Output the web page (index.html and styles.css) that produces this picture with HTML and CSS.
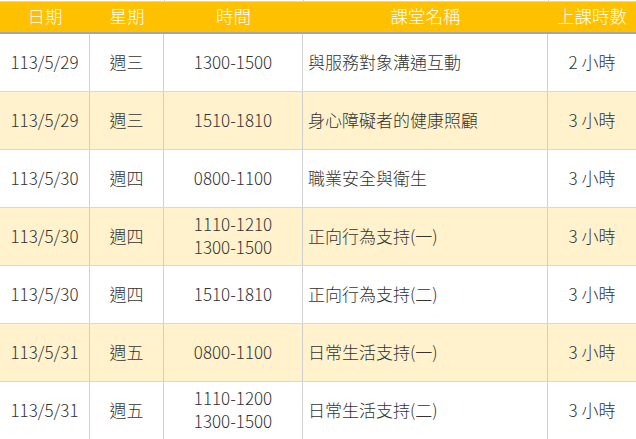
FILE: index.html
```html
<!DOCTYPE html>
<html lang="zh-Hant">
<head>
<meta charset="utf-8">
<title>課程表</title>
<link rel="stylesheet" href="styles.css">
</head>
<body>
<div class="schedule">
  <div class="ghost"><span></span><span></span><span class="b"></span><span class="b"></span><span class="b"></span></div>
  <div class="head">
    <div>日期</div><div>星期</div><div>時間</div><div>課堂名稱</div><div>上課時數</div>
  </div>
  <div class="row">
    <div>113/5/29</div><div>週三</div><div>1300-1500</div><div class="name">與服務對象溝通互動</div><div>2 小時</div>
  </div>
  <div class="row alt">
    <div>113/5/29</div><div>週三</div><div>1510-1810</div><div class="name">身心障礙者的健康照顧</div><div>3 小時</div>
  </div>
  <div class="row">
    <div>113/5/30</div><div>週四</div><div>0800-1100</div><div class="name">職業安全與衛生</div><div>3 小時</div>
  </div>
  <div class="row alt">
    <div>113/5/30</div><div>週四</div><div>1110-1210<br>1300-1500</div><div class="name">正向行為支持(一)</div><div>3 小時</div>
  </div>
  <div class="row">
    <div>113/5/30</div><div>週四</div><div>1510-1810</div><div class="name">正向行為支持(二)</div><div>3 小時</div>
  </div>
  <div class="row alt">
    <div>113/5/31</div><div>週五</div><div>0800-1100</div><div class="name">日常生活支持(一)</div><div>3 小時</div>
  </div>
  <div class="row">
    <div>113/5/31</div><div>週五</div><div>1110-1200<br>1300-1500</div><div class="name">日常生活支持(二)</div><div>3 小時</div>
  </div>
</div>
</body>
</html>
```
FILE: styles.css
```css
html, body {
  margin: 0;
  padding: 0;
  background: #ffffff;
}
.schedule {
  width: 636px;
  font-family: "Noto Sans CJK TC", "Noto Sans", sans-serif;
  font-weight: 300;
  color: #333333;
}
.ghost, .head, .row {
  display: grid;
  grid-template-columns: 90px 74px 139px 245px 88px;
}
.ghost {
  height: 1px;
}
.ghost .b {
  border-left: 1px solid #d0d0d0;
}
.head {
  height: 33px;
  box-sizing: border-box;
  background: #ffc000;
  border-top: 1px solid #ffd966;
  border-bottom: 2px solid #a6a6a6;
  color: #ffffff;
  font-size: 17.5px;
  line-height: 28px;
}
.head > div {
  text-align: center;
  white-space: nowrap;
}
.row {
  height: 58px;
  box-sizing: border-box;
  border-bottom: 1px solid #ffd966;
  font-size: 17px;
  line-height: 23px;
}
.row.alt {
  background: #fff2cc;
}
.row > div {
  display: flex;
  flex-direction: column;
  align-items: center;
  justify-content: center;
  text-align: center;
  border-right: 1px solid #d0d0d0;
  white-space: nowrap;
  padding-bottom: 3px;
}
.row > div:last-child {
  border-right: none;
}
.row > .name {
  align-items: flex-start;
  text-align: left;
  padding-left: 5px;
}
```
